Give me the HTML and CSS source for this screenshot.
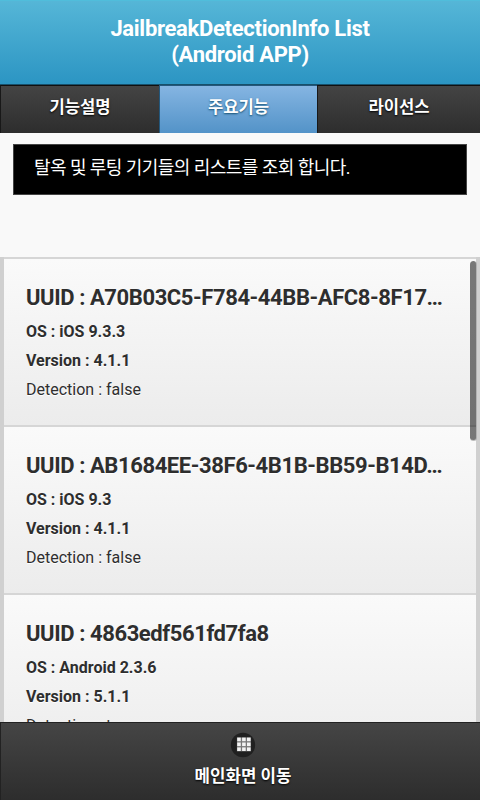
FILE: index.html
```html
<!DOCTYPE html>
<html lang="ko">
<head>
<meta charset="utf-8">
<title>JailbreakDetectionInfo List</title>
<link rel="stylesheet" href="styles.css">
</head>
<body>
<div class="page">
  <header class="header"><h1><span class="line">JailbreakDetectionInfo List</span><br><span class="line">(Android APP)</span></h1></header>
  <nav class="tabs">
    <a class="tab"><span>기능설명</span></a>
    <a class="tab active"><span>주요기능</span></a>
    <a class="tab last"><span>라이선스</span></a>
  </nav>
  <main class="content">
    <p class="notice"><span>탈옥 및 루팅 기기들의 리스트를 조회 합니다.</span></p>
    <div class="scroller">
      <ul class="list">
        <li class="item">
          <h2><span>UUID : A70B03C5-F784-44BB-AFC8-8F17…</span></h2>
          <p class="strong"><span>OS : iOS 9.3.3</span></p>
          <p class="strong"><span>Version : 4.1.1</span></p>
          <p><span>Detection : false</span></p>
        </li>
        <li class="item">
          <h2><span>UUID : AB1684EE-38F6-4B1B-BB59-B14D…</span></h2>
          <p class="strong"><span>OS : iOS 9.3</span></p>
          <p class="strong"><span>Version : 4.1.1</span></p>
          <p><span>Detection : false</span></p>
        </li>
        <li class="item">
          <h2><span>UUID : 4863edf561fd7fa8</span></h2>
          <p class="strong"><span>OS : Android 2.3.6</span></p>
          <p class="strong"><span>Version : 5.1.1</span></p>
          <p><span>Detection : true</span></p>
        </li>
      </ul>
      <div class="thumb"></div>
    </div>
  </main>
  <footer class="footer">
    <svg class="grid-icon" width="26" height="26" viewBox="0 0 26 26">
      <circle cx="13" cy="13" r="12.2" fill="#202020"/>
      <rect x="6.9" y="5.4" width="14" height="14" fill="#777"/>
      <g fill="#f2f2f2">
        <rect x="7.2" y="5.6" width="3.6" height="3.6"/><rect x="12.1" y="5.6" width="3.6" height="3.6"/><rect x="17" y="5.6" width="3.6" height="3.6"/>
        <rect x="7.2" y="10.5" width="3.6" height="3.6"/><rect x="12.1" y="10.5" width="3.6" height="3.6"/><rect x="17" y="10.5" width="3.6" height="3.6"/>
        <rect x="7.2" y="15.4" width="3.6" height="3.6"/><rect x="12.1" y="15.4" width="3.6" height="3.6"/><rect x="17" y="15.4" width="3.6" height="3.6"/>
      </g>
    </svg>
    <span class="footer-label">메인화면 이동</span>
  </footer>
</div>
</body>
</html>
```
FILE: styles.css
```css
* { box-sizing: border-box; }
body, h1, h2, p, ul { margin: 0; padding: 0; }
body {
  font-family: Roboto, "Noto Sans CJK KR", sans-serif;
  color: #2e2e2e;
  background: #f9f9f9;
}
.page {
  display: flex;
  flex-direction: column;
  width: 480px;
  height: 800px;
  overflow: hidden;
}
.header {
  height: 85px;
  padding-top: 15px;
  border-top: 1px solid #50bddb;
  border-bottom: 1px solid #17506b;
  background: linear-gradient(#55b6d7, #2c95c3);
}
.header h1 {
  color: #fff;
  text-align: center;
  font-size: 22px;
  line-height: 26px;
  font-weight: 700;
  letter-spacing: -.3px;
}
.tabs { display: flex; height: 48px; }
.tab {
  width: 159px;
  padding-top: 8px;
  text-align: center;
  font-size: 16.6px;
  line-height: 28px;
  font-weight: 700;
  color: #fff;
  text-shadow: 0 1px 2px #000;
  background: linear-gradient(#444, #2d2d2d);
  border-top: 1px solid #111;
  border-left: 1px solid #181818;
}
.tab.active {
  width: 158px;
  background: linear-gradient(#85b5e2, #5393c8);
  border-color: #24577b;
  text-shadow: 0 1px 2px #145072;
}
.tab.last { width: 163px; }
.content {
  display: flex;
  flex: 1;
  min-height: 0;
  flex-direction: column;
}
.notice {
  height: 51px;
  margin: 11px 13px 62px;
  padding: 9px 20px;
  border: 1px solid #444;
  background: #000;
  color: #fff;
  font-size: 18px;
  line-height: 27px;
  letter-spacing: -.55px;
}
.scroller {
  position: relative;
  flex: 1;
  min-height: 0;
  overflow: hidden;
  padding: 0 4px;
  background: #d0d0d0;
}
.list { list-style: none; }
.item {
  height: 168px;
  padding: 25px 21px 0 22px;
  border-top: 2px solid #d6d6d6;
  background: linear-gradient(#fafafa, #ececec);
  text-shadow: 0 1px 0 #fff;
  white-space: nowrap;
}
.item h2 { font-size: 22px; line-height: 28px; font-weight: 700; letter-spacing: -.41px; margin-bottom: 5px; }
.item p { font-size: 16px; line-height: 29.2px; }
.item .strong { font-weight: 700; }
.thumb {
  position: absolute;
  top: 4px;
  right: 3px;
  width: 7px;
  height: 180px;
  border: 1px solid rgba(255,255,255,.5);
  border-width: 0 1px 1px 0;
  border-radius: 4px;
  background: rgba(0,0,0,.52);
}
.footer {
  display: flex;
  flex-direction: column;
  align-items: center;
  height: 78px;
  padding: 9px 0 0 5px;
  border-top: 1px solid #222;
  border-left: 1px solid #222;
  background: linear-gradient(#454545, #2d2d2d);
  color: #fff;
  text-shadow: 0 1px 2px #000;
}
.grid-icon { display: block; flex-shrink: 0; }
.footer-label { font-size: 16.8px; line-height: 26px; font-weight: 700; margin-top: 5px; }
```
